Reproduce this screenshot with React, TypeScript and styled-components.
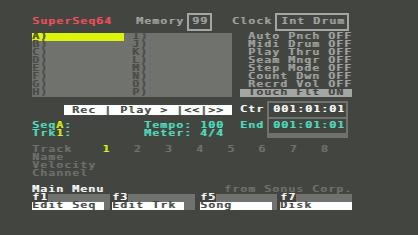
import styled, { createGlobalStyle } from "styled-components";

const c = {
  bg: "#434541",
  panel: "#70726e",
  dim: "#494b47",
  light: "#a4a6a3",
  red: "#f4505c",
  yellow: "#dcf50a",
  cyan: "#4fe0c2",
  white: "#ffffff",
  ink: "#40423e",
};

const GlobalStyle = createGlobalStyle`
  html, body {
    margin: 0;
    padding: 0;
    background: ${c.bg};
    width: 418px;
    height: 235px;
    overflow: hidden;
    font-family: "DejaVu Sans Mono", "Liberation Mono", monospace;
    font-size: 11px;
    line-height: 8px;
  }
`;

// one 8px character cell per letter, like the C64 screen.
// the shadow doubles the stems, the squash keeps glyphs inside the 8px row
const Text = styled.span<{ $color?: string }>`
  display: inline-block;
  font-family: "DejaVu Sans Mono", "Liberation Mono", monospace;
  font-size: 11px;
  line-height: 8px;
  letter-spacing: calc(8px - 1ch);
  white-space: pre;
  vertical-align: top;
  color: ${(p) => p.$color || c.light};
  text-shadow: 1px 0 0 currentColor;
  transform: scaleY(0.86);
  transform-origin: 0 0;
`;

const Tint = styled.span<{ $color: string }>`
  color: ${(p) => p.$color};
`;

const Screen = styled.div`
  padding: 13px 0 0 32px;
  width: 320px;
`;

// top line: title, memory, clock
const Header = styled.div`
  display: flex;
  align-items: center;
  height: 18px;
`;

const HeaderItem = styled.div<{ $gap: number }>`
  margin-left: ${(p) => p.$gap}px;
  height: 8px;
`;

const ValueBox = styled.div<{ $padLeft: number; $padRight: number }>`
  display: flex;
  align-items: center;
  height: 14px;
  margin-left: 3px;
  border: 2px solid ${c.light};
  padding: 0 ${(p) => p.$padRight}px 0 ${(p) => p.$padLeft}px;
`;

// sequence slots + option switches
const Panel = styled.div`
  display: flex;
  gap: 8px;
  margin-top: 2px;
`;

const SlotBlock = styled.div`
  width: 200px;
  background: ${c.panel};
`;

const Row = styled.div`
  display: flex;
  height: 8px;
`;

const SlotCell = styled.div<{ $active?: boolean }>`
  width: ${(p) => (p.$active ? 96 : 104)}px;
  margin-right: ${(p) => (p.$active ? 8 : 0)}px;
  height: 8px;
  background: ${(p) => (p.$active ? c.yellow : "transparent")};
`;

const OptionBlock = styled.div`
  width: 112px;
`;

const OptionRow = styled.div<{ $on?: boolean }>`
  height: 8px;
  background: ${(p) => (p.$on ? c.light : "transparent")};
`;

// transport + counters
const Middle = styled.div`
  display: flex;
`;

const MiddleLeft = styled.div`
  width: 208px;
  padding-top: 8px;
`;

const TransportBar = styled.div`
  margin-left: 32px;
  width: 168px;
  height: 8px;
  padding: 2px 0 0;
  background: ${c.white};
`;

const InfoRows = styled.div`
  margin-top: 7px;
`;

const InfoName = styled.div`
  width: 112px;
`;

const CounterGroup = styled.div`
  display: flex;
  padding-top: 4px;
`;

const CounterLabels = styled.div`
  display: flex;
  flex-direction: column;
  gap: 2px;
  padding-top: 2px;
  width: 27px;
`;

const CounterLine = styled.div`
  display: flex;
  align-items: center;
  height: 14px;
`;

const CounterBox = styled.div`
  display: flex;
  flex-direction: column;
  gap: 2px;
  border: 2px solid ${c.panel};
  background: ${c.panel};
  width: 77px;
`;

const CounterCell = styled(CounterLine)`
  padding-left: 4px;
  background: ${c.bg};
`;

// track table
const TrackTable = styled.div`
  margin-top: 8px;
`;

const TrackHead = styled.div`
  width: 72px;
`;

const TrackCell = styled.div`
  width: 32px;
`;

// function keys
const MenuHeader = styled.div`
  display: flex;
  justify-content: space-between;
  margin-top: 8px;
  height: 8px;
`;

const FKeys = styled.div`
  display: flex;
`;

const FKey = styled.div<{ $w: number; $gap: number }>`
  width: ${(p) => p.$w}px;
  margin-right: ${(p) => p.$gap}px;
  background: ${c.panel};
`;

const KeyCap = styled.div`
  width: 16px;
  height: 8px;
  background: ${c.ink};
`;

const FKeyLabel = styled.div`
  width: 72px;
  height: 8px;
  background: ${c.white};
`;

const slots = ["AI", "BJ", "CK", "DL", "EM", "FN", "GO", "HP"];

const options = [
  " Auto Pnch OFF",
  " Midi Drum OFF",
  " Play Thru OFF",
  " Seam Mngr OFF",
  " Step Mode OFF",
  " Count Dwn OFF",
  " Recrd Vol OFF",
  " Touch Flt ON ",
];

const fkeys = [
  { key: "f1", label: "Edit Seq", w: 78, gap: 2 },
  { key: "f3", label: "Edit Trk", w: 83, gap: 5 },
  { key: "f5", label: "Song", w: 77, gap: 3 },
  { key: "f7", label: "Disk", w: 72, gap: 0 },
];

export default function App() {
  return (
    <>
      <GlobalStyle />
      <Screen>
        <Header>
          <HeaderItem $gap={0}>
            <Text $color={c.red}>SuperSeq64</Text>
          </HeaderItem>
          <HeaderItem $gap={24}>
            <Text>Memory</Text>
          </HeaderItem>
          <ValueBox $padLeft={3} $padRight={2}>
            <Text>99</Text>
          </ValueBox>
          <HeaderItem $gap={20}>
            <Text>Clock</Text>
          </HeaderItem>
          <ValueBox $padLeft={4} $padRight={2}>
            <Text>Int Drum</Text>
          </ValueBox>
        </Header>

        <Panel>
          <SlotBlock>
            {slots.map((s, i) => (
              <Row key={s}>
                <SlotCell $active={i === 0}>
                  <Text $color={i === 0 ? c.ink : c.dim}>{s[0]})</Text>
                </SlotCell>
                <SlotCell>
                  <Text $color={c.dim}>{s[1]})</Text>
                </SlotCell>
              </Row>
            ))}
          </SlotBlock>
          <OptionBlock>
            {options.map((o, i) => {
              const on = i === options.length - 1;
              return (
                <OptionRow key={o} $on={on}>
                  <Text $color={on ? c.ink : c.light}>{o}</Text>
                </OptionRow>
              );
            })}
          </OptionBlock>
        </Panel>

        <Middle>
          <MiddleLeft>
            <TransportBar>
              <Text $color={c.ink}>{" Rec | Play > |<<|>> "}</Text>
            </TransportBar>
            <InfoRows>
              <Row>
                <InfoName>
                  <Text $color={c.cyan}>
                    Seq<Tint $color={c.yellow}>A</Tint>:
                  </Text>
                </InfoName>
                <Text $color={c.cyan}>Tempo: 100</Text>
              </Row>
              <Row>
                <InfoName>
                  <Text $color={c.cyan}>
                    Trk<Tint $color={c.yellow}>1</Tint>:
                  </Text>
                </InfoName>
                <Text $color={c.cyan}>Meter: 4/4</Text>
              </Row>
            </InfoRows>
          </MiddleLeft>
          <CounterGroup>
            <CounterLabels>
              <CounterLine>
                <Text $color={c.white}>Ctr</Text>
              </CounterLine>
              <CounterLine>
                <Text $color={c.cyan}>End</Text>
              </CounterLine>
            </CounterLabels>
            <CounterBox>
              <CounterCell>
                <Text $color={c.white}>001:01:01</Text>
              </CounterCell>
              <CounterCell>
                <Text $color={c.cyan}>001:01:01</Text>
              </CounterCell>
            </CounterBox>
          </CounterGroup>
        </Middle>

        <TrackTable>
          <Row>
            <TrackHead>
              <Text $color={c.panel}>Track</Text>
            </TrackHead>
            {[1, 2, 3, 4, 5, 6, 7, 8].map((n) => (
              <TrackCell key={n}>
                <Text $color={n === 1 ? c.yellow : c.panel}>{n}</Text>
              </TrackCell>
            ))}
          </Row>
          {["Name", "Velocity", "Channel"].map((r) => (
            <Row key={r}>
              <TrackHead>
                <Text $color={c.panel}>{r}</Text>
              </TrackHead>
            </Row>
          ))}
        </TrackTable>

        <MenuHeader>
          <Text $color={c.white}>Main Menu</Text>
          <Text $color={c.panel}>from Sonus Corp.</Text>
        </MenuHeader>
        <FKeys>
          {fkeys.map((f) => (
            <FKey key={f.key} $w={f.w} $gap={f.gap}>
              <KeyCap>
                <Text $color={c.white}>{f.key}</Text>
              </KeyCap>
              <FKeyLabel>
                <Text $color={c.ink}>{f.label}</Text>
              </FKeyLabel>
            </FKey>
          ))}
        </FKeys>
      </Screen>
    </>
  );
}
